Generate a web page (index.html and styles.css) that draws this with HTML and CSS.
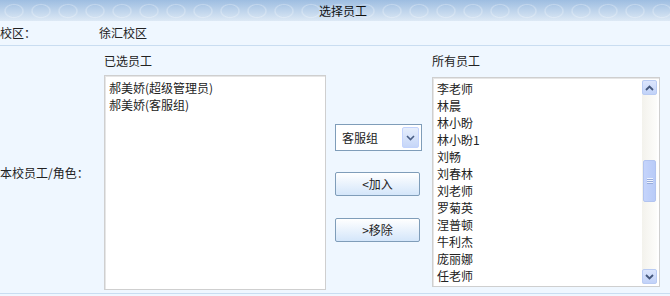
FILE: index.html
```html
<!DOCTYPE html>
<html lang="zh-CN">
  <head>
    <meta charset="UTF-8" />
    <title>选择员工</title>
    <link rel="stylesheet" href="styles.css">
  </head>
  <body>
    <!-- 标题栏 -->
    <div class="header">选择员工</div>

    <!-- 校区 -->
    <div class="row row-campus">
      <div class="label">校区：</div>
      <div class="value">徐汇校区</div>
    </div>

    <!-- 员工选择 -->
    <div class="row row-staff">
      <div class="label label-staff">本校员工/角色：</div>

      <div class="col col-left">
        <div class="col-title">已选员工</div>
        <div class="listbox list-selected">
          <div class="item">郝美娇(超级管理员)</div>
          <div class="item">郝美娇(客服组)</div>
        </div>
      </div>

      <div class="col col-mid">
        <div class="select">
          <span class="select-text">客服组</span>
          <span class="select-btn">
            <svg width="9" height="6" viewBox="0 0 9 6"><path d="M1 1 L4.5 4.5 L8 1" fill="none" stroke="#4a5f86" stroke-width="1.6"/></svg>
          </span>
        </div>
        <div class="btn btn-add">&lt;加入</div>
        <div class="btn btn-remove">&gt;移除</div>
      </div>

      <div class="col col-right">
        <div class="col-title">所有员工</div>
        <div class="listbox list-all">
          <div class="items">
            <div class="item">李老师</div>
            <div class="item">林晨</div>
            <div class="item">林小盼</div>
            <div class="item">林小盼1</div>
            <div class="item">刘畅</div>
            <div class="item">刘春林</div>
            <div class="item">刘老师</div>
            <div class="item">罗菊英</div>
            <div class="item">涅普顿</div>
            <div class="item">牛利杰</div>
            <div class="item">庞丽娜</div>
            <div class="item">任老师</div>
          </div>
          <!-- 滚动条 -->
          <div class="scrollbar">
            <div class="sb-arrow">
              <svg width="9" height="6" viewBox="0 0 9 6"><path d="M1 5 L4.5 1.5 L8 5" fill="none" stroke="#44577c" stroke-width="1.8"/></svg>
            </div>
            <div class="sb-track">
              <div class="sb-thumb">
                <span class="grip"></span>
              </div>
            </div>
            <div class="sb-arrow">
              <svg width="9" height="6" viewBox="0 0 9 6"><path d="M1 1 L4.5 4.5 L8 1" fill="none" stroke="#44577c" stroke-width="1.8"/></svg>
            </div>
          </div>
        </div>
      </div>
    </div>
  </body>
</html>
```

FILE: styles.css
```css
/* 基本样式 */
body {
  margin: 0;
  background-color: #eff7ff;
  font-family: "Noto Sans CJK SC", "Noto Sans", sans-serif;
  font-size: 12px;
  color: #222;
}

.header {
  height: 21px;
  line-height: 21px;
  padding-left: 16px;
  text-align: center;
  color: #111;
  background-image:
    radial-gradient(ellipse 11px 8px at 14px 11px, transparent 70%, rgba(255, 255, 255, 0.28) 80%, transparent 95%),
    linear-gradient(#9dbde1, #dde9f5);
  background-size: 27px 21px, auto;
  background-repeat: repeat-x, no-repeat;
}

.row {
  display: flex;
  border-bottom: 1px solid #c9ddf1;
}

.row-campus {
  height: 24px;
  line-height: 24px;
}

.row-campus .label {
  width: 99px;
}

.row-staff {
  height: 247px;
}

.label-staff {
  width: 104px;
  align-self: center;
  margin-top: 6px;
}

.col-title {
  height: 29px;
  line-height: 30px;
}

.col-left {
  width: 222px;
}

.listbox {
  background-color: #fff;
  border: 1px solid #cfcfcf;
  box-shadow: inset 1px 1px 0 #e6e6e6;
  box-sizing: border-box;
}

.list-selected {
  height: 215px;
  padding: 3px 4px;
}

.item {
  line-height: 17px;
  white-space: nowrap;
}

/* 中间按钮 */
.col-mid {
  width: 106px;
  display: flex;
  flex-direction: column;
  padding-left: 9px;
  box-sizing: border-box;
}

.select {
  margin-top: 78px;
  width: 87px;
  height: 27px;
  border: 1px solid #7f9db9;
  box-sizing: border-box;
  background-color: #fff;
  display: flex;
  align-items: center;
  justify-content: space-between;
  padding: 0 2px 0 6px;
}

.select-btn {
  width: 17px;
  height: 21px;
  display: flex;
  align-items: center;
  justify-content: center;
  border: 1px solid #c3d3fd;
  box-sizing: border-box;
  border-radius: 2px;
  background: linear-gradient(#e6eefc, #c6d6f8);
}

.btn {
  width: 85px;
  height: 24px;
  line-height: 22px;
  text-align: center;
  border: 1px solid #7f9db9;
  box-sizing: border-box;
  border-radius: 2px;
  background: linear-gradient(#ffffff, #d4e6fa);
  color: #222;
}

.btn-add {
  margin-top: 21px;
}

.btn-remove {
  margin-top: 22px;
}

/* 右侧列表 */
.col-right {
  width: 228px;
}

.list-all {
  height: 210px;
  margin-top: 2px;
  display: flex;
  overflow: hidden;
}

.items {
  flex: 1;
  padding: 2px 4px;
}

.scrollbar {
  width: 15px;
  margin: 2px 2px 2px 0;
  display: flex;
  flex-direction: column;
  background: linear-gradient(90deg, #f3f2ec, #fdfdfb);
}

.sb-arrow {
  height: 15px;
  display: flex;
  align-items: center;
  justify-content: center;
  border: 1px solid #b9cbf3;
  border-radius: 2px;
  box-sizing: border-box;
  background: linear-gradient(#dce6fd, #c1d2f8);
}

.sb-track {
  flex: 1;
  padding-top: 65px;
}

.sb-thumb {
  height: 42px;
  margin: 0 1px;
  border: 1px solid #b2c4f0;
  border-radius: 2px;
  box-sizing: border-box;
  background: linear-gradient(90deg, #c5d4fb, #b8cbf8);
  display: flex;
  align-items: center;
  justify-content: center;
}

.grip {
  width: 6px;
  height: 6px;
  background: repeating-linear-gradient(#eef3fe 0 1px, #98acdb 1px 2px);
}
```
